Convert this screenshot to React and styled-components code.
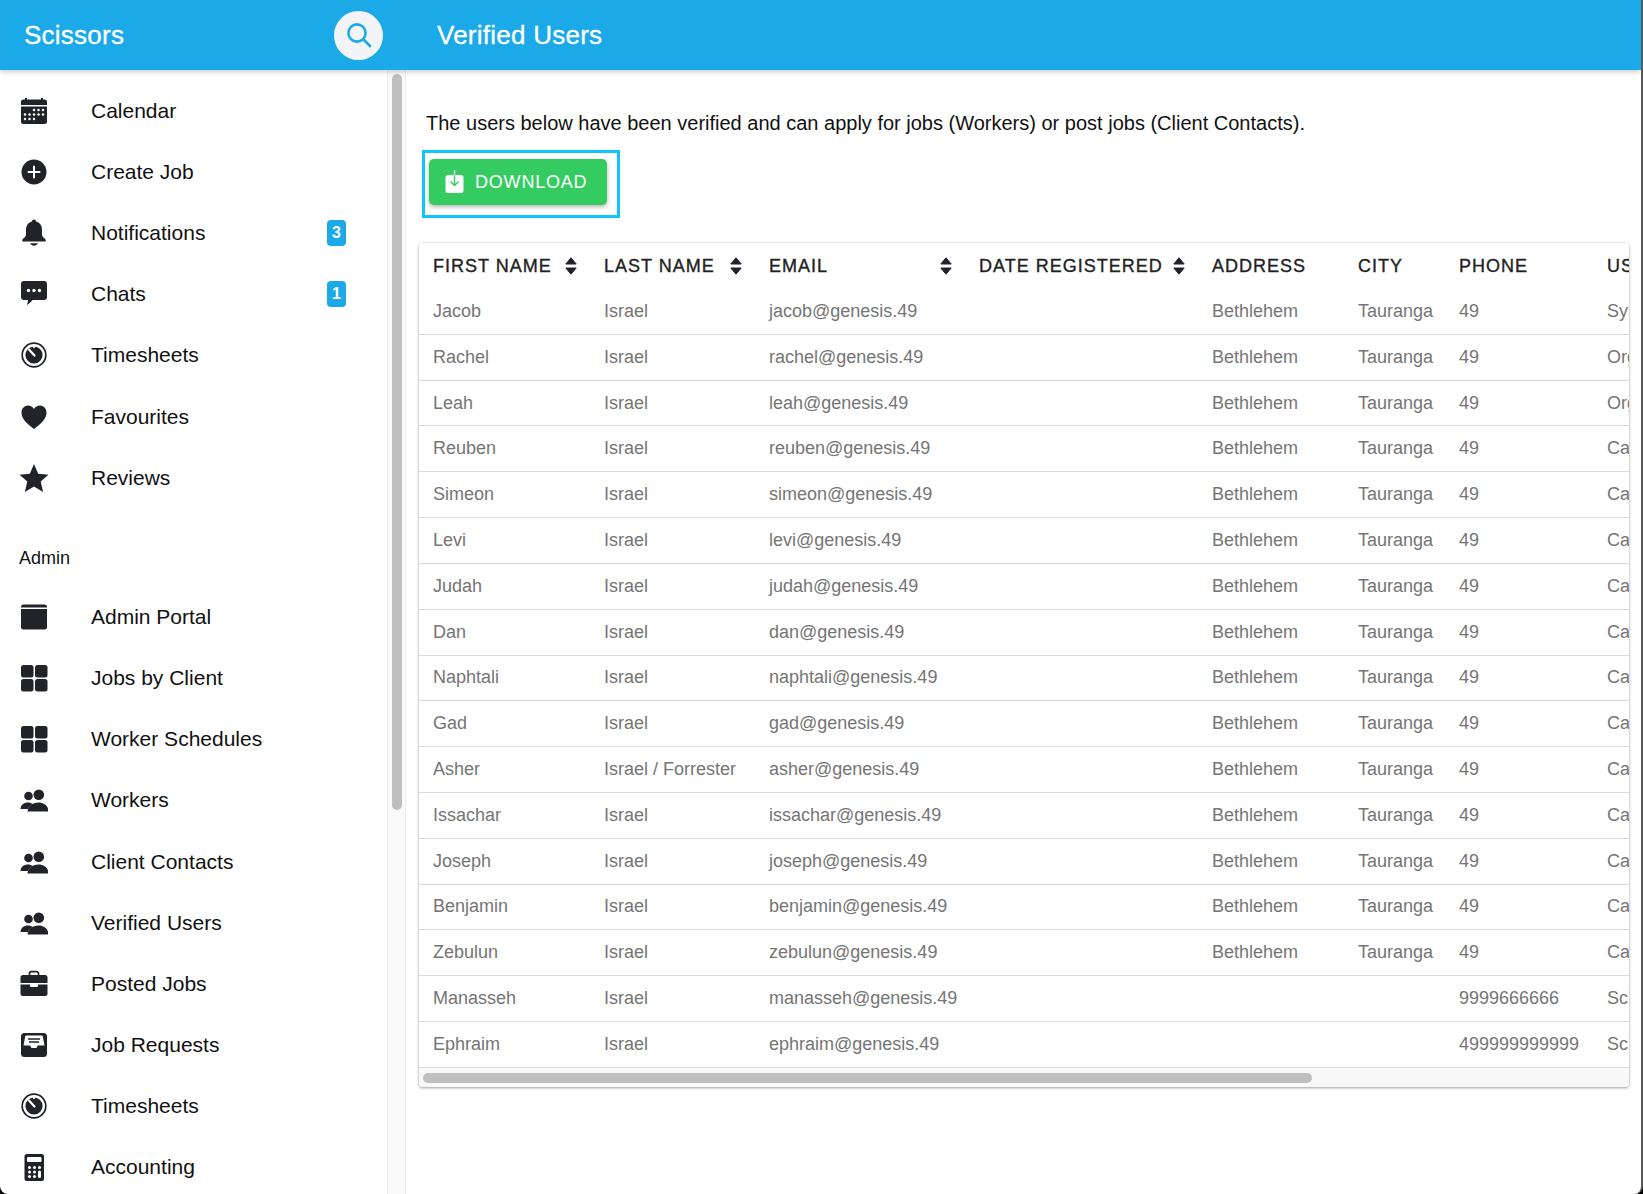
import React from 'react';
import styled, { createGlobalStyle } from 'styled-components';

const GlobalStyle = createGlobalStyle`
  html, body, #root {
    height: 100%;
    margin: 0;
  }
  body {
    background: #000;
    overflow: hidden;
    font-family: "Liberation Sans", Arial, sans-serif;
  }
`;

const Shell = styled.div`
  height: 100vh;
  box-sizing: border-box;
  display: flex;
  flex-direction: column;
  overflow: hidden;
  background: #fff;
  border-right: 2px solid #5a5a5a;
  border-radius: 0 0 8px 8px;
`;

const TopBar = styled.header`
  flex: none;
  height: 70px;
  display: flex;
  align-items: center;
  background: #1ba9e8;
  box-shadow: 0 2px 5px rgba(0, 0, 0, 0.2);
  color: #fff;
  position: relative;
  z-index: 2;
`;

const Brand = styled.div`
  width: 437px;
  box-sizing: border-box;
  padding: 0 54px 0 24px;
  display: flex;
  align-items: center;
  justify-content: space-between;
`;

const BarTitle = styled.span`
  font-size: 26px;
  letter-spacing: 0.25px;
  -webkit-text-stroke: 0.3px #fff;
`;

const SearchButton = styled.button`
  width: 49px;
  height: 49px;
  padding: 0;
  border: 0;
  border-radius: 50%;
  background: #f2f4f8;
  display: flex;
  align-items: center;
  justify-content: center;
`;

const Body = styled.div`
  flex: 1;
  min-height: 0;
  display: flex;
`;

const Sidebar = styled.nav`
  flex: none;
  width: 387px;
  box-sizing: border-box;
  padding-top: 10.5px;
  overflow: hidden;
`;

const NavRow = styled.a`
  height: 61.1px;
  box-sizing: border-box;
  padding: 0 41px 0 14px;
  display: flex;
  align-items: center;
  color: #111;
  font-size: 21px;
`;

const NavIcon = styled.span`
  flex: none;
  width: 40px;
  height: 32px;
  margin-right: 37px;
  display: flex;
  align-items: center;
  justify-content: center;
`;

const NavLabel = styled.span`
  flex: 1;
`;

const Badge = styled.span`
  width: 19px;
  height: 26px;
  border-radius: 4px;
  background: #1ba9e8;
  color: #fff;
  font-size: 16px;
  font-weight: bold;
  display: flex;
  align-items: center;
  justify-content: center;
`;

const SectionLabel = styled.div`
  height: 78.5px;
  box-sizing: border-box;
  padding: 38px 0 0 19px;
  font-size: 18px;
  line-height: 24px;
  color: #111;
`;

const ScrollTrack = styled.div`
  flex: none;
  width: 19px;
  box-sizing: border-box;
  padding: 4px 3px 0 4px;
  background: #fafafa;
  border-left: 1px solid #ececec;
  border-right: 1px solid #ececec;
`;

const ScrollThumb = styled.div`
  width: 10px;
  height: 736px;
  border-radius: 5px;
  background: #bfbfbf;
`;

const Main = styled.main`
  flex: 1;
  min-width: 0;
  padding: 41px 12px 0 13px;
`;

const Intro = styled.p`
  margin: 0 0 15px 7px;
  font-size: 20px;
  line-height: 24px;
  color: #111;
  white-space: nowrap;
`;

const Highlight = styled.div`
  width: 198px;
  height: 68px;
  box-sizing: border-box;
  margin-left: 3px;
  padding: 6px 10px 10px 4px;
  border: 3px solid #10c4ff;
`;

const DownloadButton = styled.button`
  width: 178px;
  height: 46px;
  padding: 0 0 0 16px;
  border: 0;
  border-radius: 5px;
  background: #34cc60;
  box-shadow: 0 2px 4px rgba(0, 0, 0, 0.3);
  color: #fff;
  font-family: inherit;
  font-size: 18px;
  letter-spacing: 0.8px;
  display: flex;
  align-items: center;
  gap: 11px;
`;

const Card = styled.section`
  margin-top: 25px;
  border-radius: 4px;
  background: #fff;
  overflow: hidden;
  box-shadow: 0 1px 3px rgba(0, 0, 0, 0.35), 0 0 3px rgba(0, 0, 0, 0.08);
`;

const Grid = styled.div`
  width: 1374px;
`;

const Row = styled.div`
  display: grid;
  grid-template-columns: 171px 165px 210px 233px 146px 101px 148px 200px;
  height: ${(p) => (p.$head ? '46px' : '45.82px')};
  box-sizing: border-box;
  border-bottom: ${(p) => (p.$head ? '0' : '1.5px solid #dcdcdc')};
`;

const HeadCell = styled.div`
  padding: 0 13.5px 0 14px;
  display: flex;
  align-items: center;
  justify-content: space-between;
  color: #222;
  font-size: 18px;
  letter-spacing: 1px;
  -webkit-text-stroke: 0.35px #222;
  white-space: nowrap;
`;

const Cell = styled.div`
  padding-left: 14px;
  display: flex;
  align-items: center;
  color: #757575;
  font-size: 18px;
  white-space: nowrap;
  overflow: hidden;
`;

const HScroll = styled.div`
  height: 19px;
  box-sizing: border-box;
  padding: 5px 0 0 4px;
  background: #f8f8f8;
`;

const HThumb = styled.div`
  width: 889px;
  height: 10px;
  border-radius: 5px;
  background: #bfbfbf;
`;

const ink = '#222328';

const Svg = ({ children, size = 28 }) => (
  <svg width={size} height={size} viewBox="0 0 28 28" fill={ink}>
    {children}
  </svg>
);

const SearchIcon = () => (
  <svg width="30" height="30" viewBox="0 0 30 30" fill="none" stroke="#1ba9e8" strokeWidth="2.6" strokeLinecap="round">
    <circle cx="13" cy="13" r="8.6" />
    <path d="M19.5 19.5L26 26" />
  </svg>
);

const dots = [
  [14, 13], [18.5, 13], [23, 13],
  [5, 17.5], [9.5, 17.5], [14, 17.5], [18.5, 17.5], [23, 17.5],
  [5, 22], [9.5, 22], [14, 22],
];

const CalendarIcon = () => (
  <Svg>
    <path d="M1 8V5a2.5 2.5 0 0 1 2.5-2.5H5V1h2v1.500h14V1h2v1.500h1.500A2.500 2.500 0 0 1 27 5v3z" />
    <path d="M1 9.400h26v15.100a2.500 2.500 0 0 1-2.500 2.500h-21A2.500 2.500 0 0 1 1 24.500z" />
    {dots.map(([x, y]) => (
      <circle key={`${x}-${y}`} cx={x} cy={y} r="1.250" fill="#fff" />
    ))}
  </Svg>
);

const PlusIcon = () => (
  <Svg>
    <circle cx="14" cy="14" r="12.500" />
    <path d="M14 8.500v11M8.500 14h11" stroke="#fff" strokeWidth="2" strokeLinecap="round" />
  </Svg>
);

const BellIcon = () => (
  <Svg>
    <path d="M14 .5c1.200 0 2 .8 2 1.900 4 1 6 4.300 6 8.400v5c0 2.200 3.300 3.700 3.700 5.300v1.300H2.300v-1.300c.4-1.600 3.700-3.100 3.700-5.300v-5c0-4.100 2-7.400 6-8.400 0-1.100.8-1.900 2-1.900z" />
    <path d="M10.200 24.300h7.600c-.5 1.500-2 2.400-3.800 2.400s-3.300-.9-3.800-2.400z" />
  </Svg>
);

const ChatIcon = () => (
  <Svg>
    <path d="M4 1h20a3 3 0 0 1 3 3v13a3 3 0 0 1-3 3H12.500c-1.500 1.800-3.500 4-5.500 5 .7-1.600.9-3.400.9-5H4a3 3 0 0 1-3-3V4a3 3 0 0 1 3-3z" />
    <circle cx="8.500" cy="10.500" r="1.700" fill="#fff" />
    <circle cx="14" cy="10.500" r="1.700" fill="#fff" />
    <circle cx="19.500" cy="10.500" r="1.700" fill="#fff" />
  </Svg>
);

const TimerIcon = () => (
  <Svg>
    <circle cx="14" cy="14" r="11.800" fill="none" stroke={ink} strokeWidth="1.700" />
    <circle cx="14" cy="14" r="8.600" />
    <path d="M14.500 14.500L9 8.500" stroke="#fff" strokeWidth="2.200" strokeLinecap="round" />
    <path d="M14 3.500v3.500" stroke="#fff" strokeWidth="1.800" />
  </Svg>
);

const HeartIcon = () => (
  <Svg>
    <path d="M14 26C6 20 1.500 15.500 1.500 9.500 1.500 5.500 4.500 2.500 8 2.500c2.600 0 4.800 1.300 6 3.600 1.200-2.300 3.400-3.600 6-3.600 3.500 0 6.500 3 6.500 7 0 6-4.500 10.500-12.500 16.500z" />
  </Svg>
);

const StarIcon = () => (
  <svg width="30" height="30" viewBox="0 0 30 30" fill={ink}>
    <path d="M15 1l4.200 9.800 10.300.9-7.800 6.900 2.400 10.400L15 23.500 5.900 29l2.400-10.400L.5 11.700l10.300-.9z" />
  </svg>
);

const WindowIcon = () => (
  <Svg>
    <path d="M3.500 1.500h21A2.500 2.500 0 0 1 27 4v.5H1V4a2.500 2.500 0 0 1 2.500-2.500z" />
    <path d="M1 6h26v18a2.500 2.500 0 0 1-2.500 2.500h-21A2.500 2.500 0 0 1 1 24z" />
  </Svg>
);

const GridIcon = () => (
  <Svg>
    <rect x="1" y="1" width="12.500" height="12.500" rx="2.500" />
    <rect x="15" y="1" width="12.500" height="12.500" rx="2.500" />
    <rect x="1" y="15" width="12.500" height="12.500" rx="2.500" />
    <rect x="15" y="15" width="12.500" height="12.500" rx="2.500" />
  </Svg>
);

const PeopleIcon = () => (
  <Svg>
    <circle cx="8.500" cy="10" r="4.300" />
    <circle cx="18.800" cy="8.800" r="5.300" />
    <path d="M.5 23c0-3.800 3.300-6.500 7.500-6.500 2 0 3.600.6 5 1.500-2.500 1.200-4.200 3-5 5z" />
    <path d="M7.500 25.500c0-5 5-9 11-9s10 4 10 9z" />
  </Svg>
);

const BriefcaseIcon = () => (
  <Svg>
    <path d="M9.500 5V3.500A1.800 1.800 0 0 1 11.300 1.700h5.400a1.800 1.800 0 0 1 1.800 1.800V5" fill="none" stroke={ink} strokeWidth="1.700" />
    <path d="M3 5h22a2.500 2.500 0 0 1 2.500 2.500V13H.5V7.500A2.500 2.500 0 0 1 3 5z" />
    <path d="M.5 14.500H10V16a1 1 0 0 0 1 1h6a1 1 0 0 0 1-1v-1.500h9.500v9a2.500 2.500 0 0 1-2.500 2.500H3a2.500 2.500 0 0 1-2.500-2.500z" />
  </Svg>
);

const TrayIcon = () => (
  <Svg>
    <rect x="1" y="2" width="26" height="24" rx="3.500" />
    <path d="M3.500 14.500L5.200 5.300a1 1 0 0 1 1-.8h15.600a1 1 0 0 1 1 .8l1.700 9.200h-6.800L16.500 17h-5L10 14.500z" fill="#fff" />
    <path d="M8 8h12M9 11h10" stroke={ink} strokeWidth="1.400" />
  </Svg>
);

const keypad = [
  [9.500, 14.500], [14.500, 14.500], [19.500, 14.500],
  [9.500, 19], [14.500, 19], [9.500, 23.500], [14.500, 23.500],
];

const CalculatorIcon = () => (
  <Svg>
    <rect x="4.500" y="1" width="19.500" height="27" rx="2.500" />
    <rect x="7" y="4" width="14.500" height="5" rx="1" fill="#fff" />
    {keypad.map(([x, y]) => (
      <circle key={`${x}-${y}`} cx={x} cy={y} r="1.500" fill="#fff" />
    ))}
    <rect x="18" y="17.500" width="3" height="7.500" rx="1.500" fill="#fff" />
  </Svg>
);

const DownloadIcon = () => (
  <svg width="19" height="24" viewBox="0 0 19 24">
    <rect x=".5" y="5" width="18" height="18" rx="2.500" fill="#fff" />
    <path d="M9.500 0v5" stroke="#fff" strokeWidth="1.300" />
    <path d="M9.500 5v10M5.500 11.500l4 4 4-4" fill="none" stroke="#34cc60" strokeWidth="1.400" />
  </svg>
);

const SortIcon = () => (
  <svg width="12" height="18" viewBox="0 0 12 18" fill={ink} stroke={ink} strokeLinejoin="round">
    <path d="M6 .8L11.200 7H.8z" />
    <path d="M6 17.200L11.200 11H.8z" />
  </svg>
);

const mainNav = [
  { label: 'Calendar', icon: <CalendarIcon /> },
  { label: 'Create Job', icon: <PlusIcon /> },
  { label: 'Notifications', icon: <BellIcon />, badge: 3 },
  { label: 'Chats', icon: <ChatIcon />, badge: 1 },
  { label: 'Timesheets', icon: <TimerIcon /> },
  { label: 'Favourites', icon: <HeartIcon /> },
  { label: 'Reviews', icon: <StarIcon /> },
];

const adminNav = [
  { label: 'Admin Portal', icon: <WindowIcon /> },
  { label: 'Jobs by Client', icon: <GridIcon /> },
  { label: 'Worker Schedules', icon: <GridIcon /> },
  { label: 'Workers', icon: <PeopleIcon /> },
  { label: 'Client Contacts', icon: <PeopleIcon /> },
  { label: 'Verified Users', icon: <PeopleIcon /> },
  { label: 'Posted Jobs', icon: <BriefcaseIcon /> },
  { label: 'Job Requests', icon: <TrayIcon /> },
  { label: 'Timesheets', icon: <TimerIcon /> },
  { label: 'Accounting', icon: <CalculatorIcon /> },
];

const columns = [
  { title: 'FIRST NAME', sort: true },
  { title: 'LAST NAME', sort: true },
  { title: 'EMAIL', sort: true },
  { title: 'DATE REGISTERED', sort: true },
  { title: 'ADDRESS' },
  { title: 'CITY' },
  { title: 'PHONE' },
  { title: 'USER TYPE' },
];

const users = [
  ['Jacob', 'Israel', 'Synagogue'],
  ['Rachel', 'Israel', 'Organiser'],
  ['Leah', 'Israel', 'Organiser'],
  ['Reuben', 'Israel', 'Candidate'],
  ['Simeon', 'Israel', 'Candidate'],
  ['Levi', 'Israel', 'Candidate'],
  ['Judah', 'Israel', 'Candidate'],
  ['Dan', 'Israel', 'Candidate'],
  ['Naphtali', 'Israel', 'Candidate'],
  ['Gad', 'Israel', 'Candidate'],
  ['Asher', 'Israel / Forrester', 'Candidate'],
  ['Issachar', 'Israel', 'Candidate'],
  ['Joseph', 'Israel', 'Candidate'],
  ['Benjamin', 'Israel', 'Candidate'],
  ['Zebulun', 'Israel', 'Candidate'],
  ['Manasseh', 'Israel', 'Scissors', '', '', '9999666666'],
  ['Ephraim', 'Israel', 'Scissors', '', '', '499999999999'],
];

const NavItem = ({ item }) => (
  <NavRow>
    <NavIcon>{item.icon}</NavIcon>
    <NavLabel>{item.label}</NavLabel>
    {item.badge && <Badge>{item.badge}</Badge>}
  </NavRow>
);

export default function App() {
  return (
    <Shell>
      <GlobalStyle />
      <TopBar>
        <Brand>
          <BarTitle>Scissors</BarTitle>
          <SearchButton>
            <SearchIcon />
          </SearchButton>
        </Brand>
        <BarTitle>Verified Users</BarTitle>
      </TopBar>
      <Body>
        <Sidebar>
          {mainNav.map((item) => (
            <NavItem key={item.label} item={item} />
          ))}
          <SectionLabel>Admin</SectionLabel>
          {adminNav.map((item) => (
            <NavItem key={item.label} item={item} />
          ))}
        </Sidebar>
        <ScrollTrack>
          <ScrollThumb />
        </ScrollTrack>
        <Main>
          <Intro>The users below have been verified and can apply for jobs (Workers) or post jobs (Client Contacts).</Intro>
          <Highlight>
            <DownloadButton>
              <DownloadIcon />
              DOWNLOAD
            </DownloadButton>
          </Highlight>
          <Card>
            <Grid>
              <Row $head>
                {columns.map((col) => (
                  <HeadCell key={col.title}>
                    {col.title}
                    {col.sort && <SortIcon />}
                  </HeadCell>
                ))}
              </Row>
              {users.map(([first, last, type, address = 'Bethlehem', city = 'Tauranga', phone = '49']) => (
                <Row key={first}>
                  <Cell>{first}</Cell>
                  <Cell>{last}</Cell>
                  <Cell>{`${first.toLowerCase()}@genesis.49`}</Cell>
                  <Cell />
                  <Cell>{address}</Cell>
                  <Cell>{city}</Cell>
                  <Cell>{phone}</Cell>
                  <Cell>{type}</Cell>
                </Row>
              ))}
            </Grid>
            <HScroll>
              <HThumb />
            </HScroll>
          </Card>
        </Main>
      </Body>
    </Shell>
  );
}
